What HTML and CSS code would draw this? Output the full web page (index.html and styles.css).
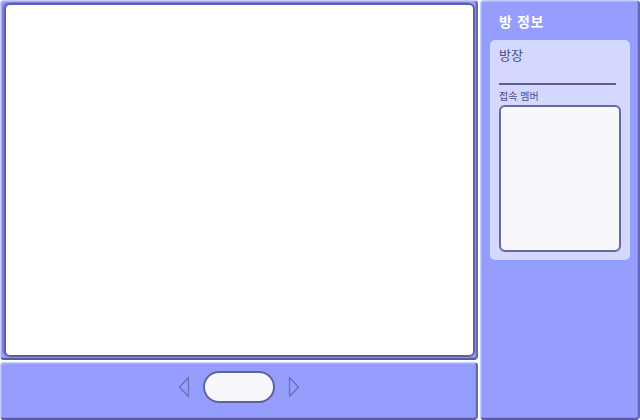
FILE: index.html
```html
<!DOCTYPE html>
<html lang="ko">
<head>
<meta charset="utf-8">
<link rel="stylesheet" href="styles.css">
</head>
<body>
<div class="app">
  <div class="left">
    <div class="panel stage">
      <div class="canvas"></div>
    </div>
    <div class="panel bar">
      <svg class="arrow" width="12" height="22" viewBox="0 0 12 22"><path d="M10.5 1.5 L1.5 11 L10.5 20.5 Z" fill="none" stroke="#6a6fb0" stroke-width="1.3" stroke-linejoin="round"/></svg>
      <div class="pill"></div>
      <svg class="arrow" width="12" height="22" viewBox="0 0 12 22"><path d="M1.5 1.5 L10.5 11 L1.5 20.5 Z" fill="none" stroke="#6a6fb0" stroke-width="1.3" stroke-linejoin="round"/></svg>
    </div>
  </div>
  <div class="panel side">
    <div class="side-title">방 정보</div>
    <div class="card">
      <div class="host">방장</div>
      <div class="rule"></div>
      <div class="members-label">접속 멤버</div>
      <div class="members"></div>
    </div>
  </div>
</div>
</body>
</html>
```

FILE: styles.css
```css
html, body {
  margin: 0;
  padding: 0;
  background: #ffffff;
}
body {
  width: 640px;
  height: 420px;
  font-family: "Noto Sans CJK KR", "Noto Sans", sans-serif;
}
.app {
  display: flex;
  gap: 2px;
  width: 640px;
  height: 420px;
}
.left {
  display: flex;
  flex-direction: column;
  gap: 2px;
  width: 478px;
  height: 420px;
}
.panel {
  background: #959dfe;
  border-radius: 4px;
  box-sizing: border-box;
  border-top: 1px solid #c8ccff;
  border-left: 1px solid #c8ccff;
  border-right: 2px solid #6468b8;
  border-bottom: 2px solid #585c9c;
  box-shadow: inset 1px 1px 0 #aab0ff, inset -1px -1px 0 #8890ee;
}
.stage {
  height: 360px;
  padding: 2px 1px 1px 3px;
  display: flex;
}
.canvas {
  flex: 1;
  background: #ffffff;
  border: 2px solid #5d629e;
  border-radius: 6px;
  box-shadow: -2px -1px 0 #7a80e0;
}
.bar {
  height: 58px;
  display: flex;
  align-items: center;
  justify-content: center;
  gap: 13px;
  padding-bottom: 8px;
}
.pill {
  width: 72px;
  height: 32px;
  box-sizing: border-box;
  background: #f8f8fc;
  border: 2px solid #5d629e;
  border-radius: 16px;
}
.arrow {
  display: block;
}
.side {
  width: 160px;
  height: 420px;
  padding: 10px 8px 0 9px;
  display: flex;
  flex-direction: column;
}
.side-title {
  color: #ffffff;
  font-size: 14px;
  font-weight: 700;
  letter-spacing: 0.6px;
  line-height: 20px;
  padding-left: 9px;
  height: 29px;
}
.card {
  background: #d5d8fe;
  border-radius: 5px;
  padding: 6px 8px 8px 9px;
  height: 220px;
  box-sizing: border-box;
  display: flex;
  flex-direction: column;
}
.host {
  color: #4a4e86;
  font-size: 13px;
  line-height: 18px;
  height: 18px;
}
.rule {
  margin-top: 19px;
  width: 117px;
  height: 2px;
  background: #5a5e9a;
}
.members-label {
  color: #4a4e86;
  font-size: 10px;
  line-height: 14px;
  margin-top: 4px;
  height: 14px;
}
.members {
  margin-top: 2px;
  width: 122px;
  height: 147px;
  box-sizing: border-box;
  background: #f8f8fc;
  border: 2px solid #65699f;
  border-radius: 6px;
}
```
